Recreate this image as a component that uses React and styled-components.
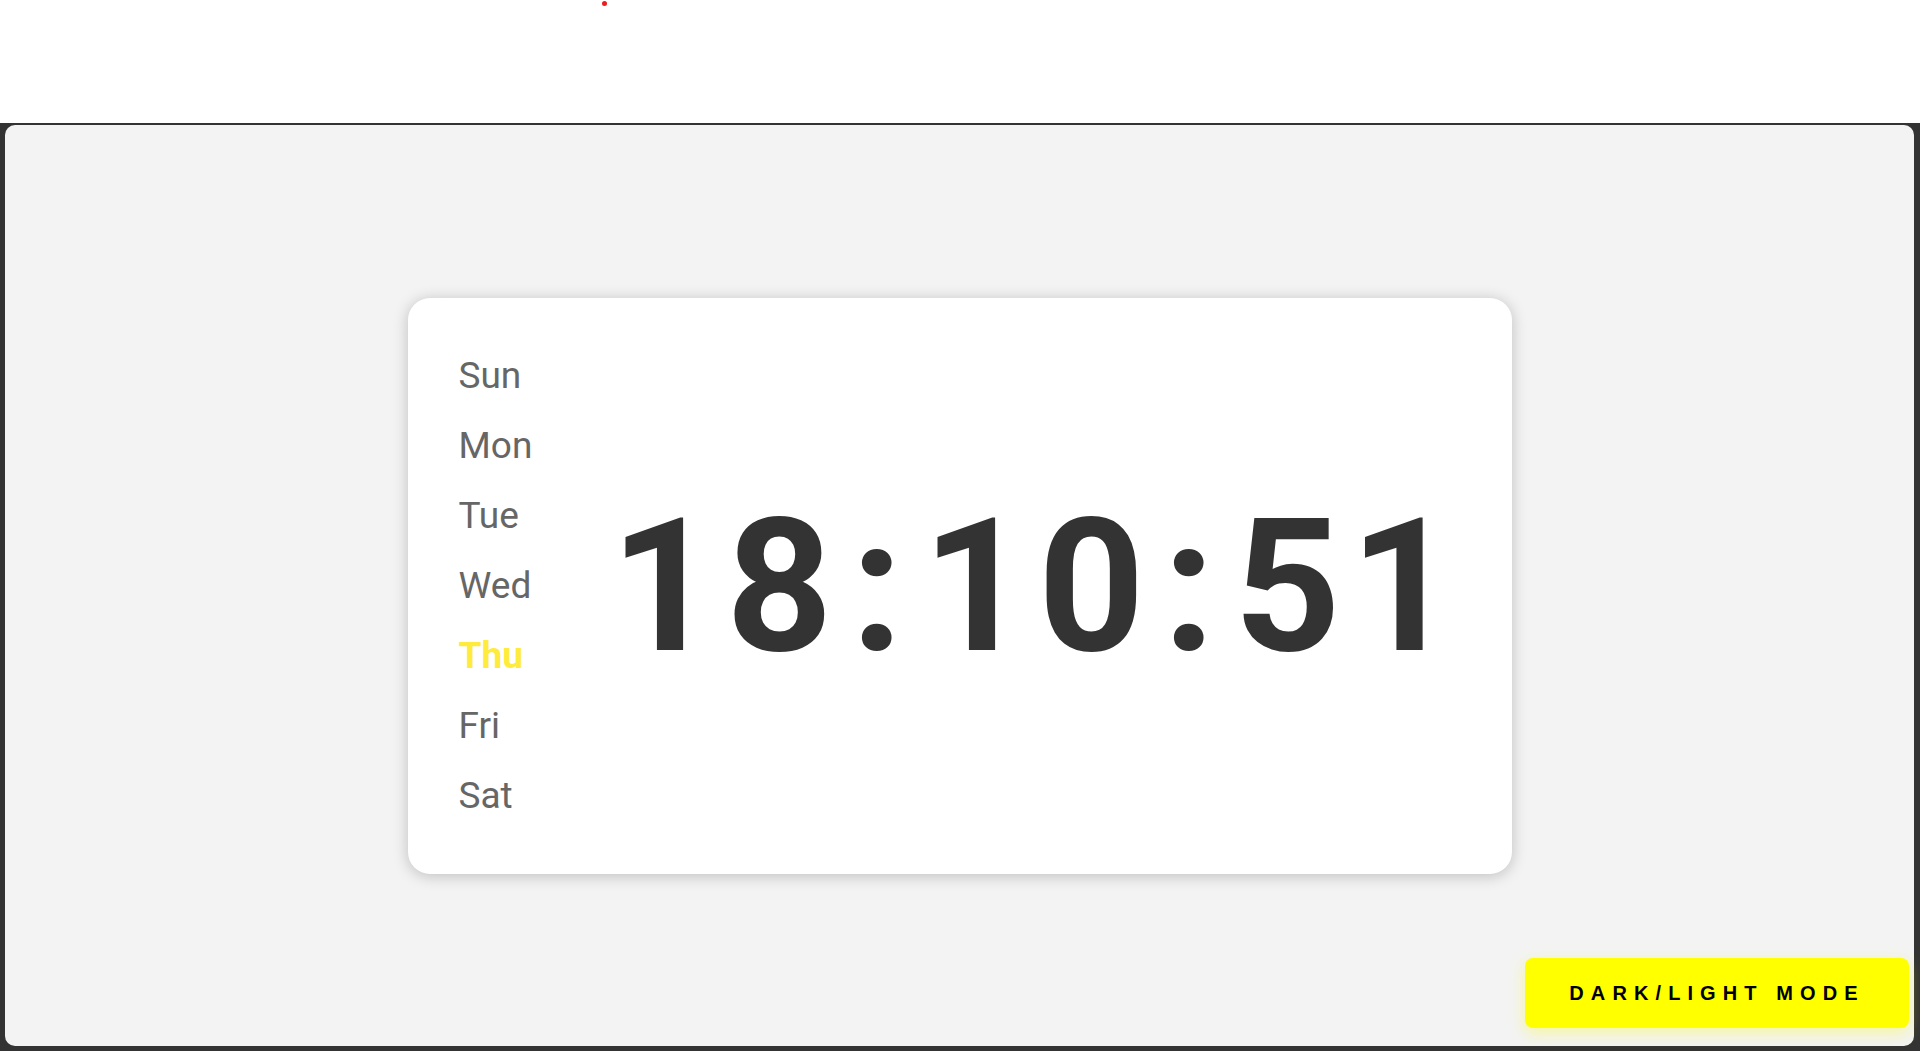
import React from "react";
import styled, { createGlobalStyle } from "styled-components";

const Global = createGlobalStyle`
  html, body { margin: 0; padding: 0; background: #ffffff; }
  body { font-family: Roboto, "Liberation Sans", sans-serif; }
  #root { height: 1051px; display: flex; flex-direction: column; }
`;

const TopBar = styled.div`
  height: 123px;
  flex: none;
  background: #ffffff;
  padding: 1px 0 0 602px;
  box-sizing: border-box;
`;

const Dot = styled.div`
  width: 5px;
  height: 5px;
  border-radius: 50%;
  background: #ee1c1c;
`;

const Frame = styled.div`
  flex: 1;
  background: #333333;
  padding: 2px 6px 5px 5px;
  display: flex;
  box-sizing: border-box;
`;

const Panel = styled.main`
  position: relative;
  flex: 1;
  background: #f3f3f3;
  border-radius: 10px;
  display: flex;
  align-items: center;
  justify-content: center;
`;

const Card = styled.section`
  width: 1104px;
  height: 576px;
  box-sizing: border-box;
  background: #ffffff;
  border-radius: 22px;
  box-shadow: 0 2px 15px rgba(0, 0, 0, 0.22);
  padding: 43px 51px;
  display: flex;
  align-items: center;
`;

const Days = styled.ul`
  list-style: none;
  margin: 0;
  padding: 0;
  display: flex;
  flex-direction: column;
  width: 80px;
`;

const Day = styled.li`
  font-family: Roboto, "Liberation Sans", sans-serif;
  font-size: 37px;
  line-height: 70px;
  height: 70px;
  color: ${(p) => (p.$active ? "#ffeb3b" : "#666666")};
  font-weight: ${(p) => (p.$active ? 700 : 400)};
`;

const Clock = styled.div`
  flex: 1;
  display: flex;
  align-items: center;
  justify-content: center;
  font-family: Roboto, "Liberation Sans", sans-serif;
  font-weight: 700;
  font-size: 186px;
  line-height: 1;
  color: #333333;
  padding: 1px 0 0 78px;
`;

const Digits = styled.span`
  letter-spacing: 9px;
`;

const Colon = styled.span`
  margin: 0 19px 0 9px;
`;

const ModeButton = styled.button`
  position: absolute;
  right: 5px;
  bottom: 18px;
  width: 384px;
  height: 70px;
  border: none;
  border-radius: 8px;
  background: #ffff00;
  box-shadow: 0 5px 15px rgba(255, 255, 0, 0.35);
  font-family: Arial, "Liberation Sans", sans-serif;
  font-weight: 700;
  font-size: 20px;
  letter-spacing: 7.1px;
  padding: 0;
  color: #000000;
  cursor: pointer;
`;

const days = ["Sun", "Mon", "Tue", "Wed", "Thu", "Fri", "Sat"];

export default function App() {
  return (
    <>
      <Global />
      <TopBar>
        <Dot />
      </TopBar>
      <Frame>
        <Panel>
          <Card>
            <Days>
              {days.map((d) => (
                <Day key={d} $active={d === "Thu"}>
                  {d}
                </Day>
              ))}
            </Days>
            <Clock>
              <Digits>18</Digits>
              <Colon>:</Colon>
              <Digits>10</Digits>
              <Colon>:</Colon>
              <Digits>51</Digits>
            </Clock>
          </Card>
          <ModeButton>DARK/LIGHT MODE</ModeButton>
        </Panel>
      </Frame>
    </>
  );
}
